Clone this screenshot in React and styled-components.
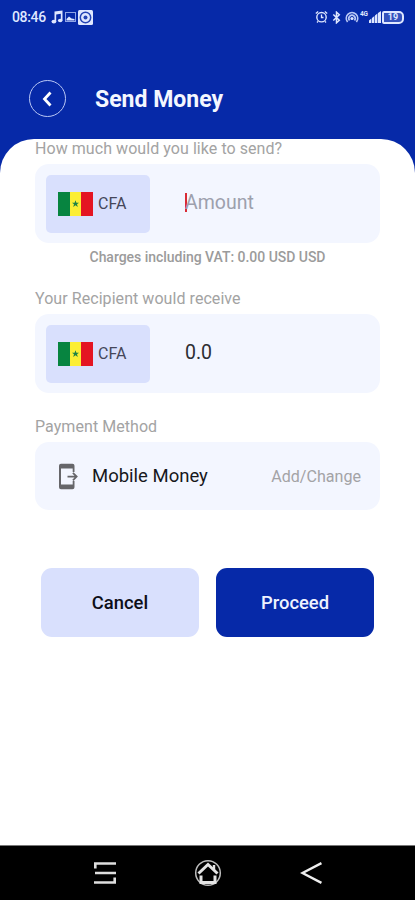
import styled, { createGlobalStyle } from "styled-components";

const GlobalStyle = createGlobalStyle`
    * {
        box-sizing: border-box;
    }

    body {
        margin: 0;
        background-color: #ffffff;
        font-family: Roboto, "Liberation Sans", sans-serif;
    }
`;

const Screen = styled.div`
    width: 415px;
    height: 900px;
    display: flex;
    flex-direction: column;
    overflow: hidden;
    background-color: #0629a8;
`;

const StatusBar = styled.div`
    height: 34px;
    padding: 0 11px 0 12px;
    display: flex;
    align-items: center;
    justify-content: space-between;
    flex-shrink: 0;
    color: #dfe7ff;
`;

const StatusGroup = styled.div`
    display: flex;
    align-items: center;
    gap: ${({ $gap }) => $gap}px;
`;

const Clock = styled.span`
    margin-right: 3px;
    font-size: 14px;
    font-weight: 500;
    letter-spacing: -0.35px;
`;

const Header = styled.header`
    height: 105px;
    padding: 46px 0 0 29px;
    display: flex;
    align-items: flex-start;
    gap: 29px;
    flex-shrink: 0;
`;

const BackButton = styled.button`
    width: 37px;
    height: 37px;
    padding: 0;
    border: 1px solid #b9c7f5;
    border-radius: 50%;
    display: flex;
    align-items: center;
    justify-content: center;
    background: none;
    color: #ffffff;
`;

const Title = styled.h1`
    margin: 0;
    font-size: 23px;
    font-weight: 700;
    line-height: 39px;
    color: #f4f7ff;
`;

const Sheet = styled.main`
    flex: 1;
    padding: 0 35px;
    border-radius: 34px 34px 0 0;
    background-color: #ffffff;
`;

const Label = styled.div`
    height: 25px;
    margin-top: ${({ $top }) => $top || 0}px;
    font-size: 16px;
    line-height: 19px;
    letter-spacing: 0.06px;
    white-space: nowrap;
    color: #a3a3a3;
`;

const Field = styled.div`
    width: 345px;
    height: 79px;
    padding: 0 11px;
    border-radius: 14px;
    display: flex;
    align-items: center;
    background-color: #f3f6ff;
`;

const CurrencyChip = styled.div`
    width: 104px;
    height: 58px;
    padding-left: 12px;
    border-radius: 5px;
    display: flex;
    align-items: center;
    gap: 5px;
    background-color: #d9e0fd;
    font-size: 16px;
    color: #45475a;
`;

const Value = styled.div`
    margin-left: 35px;
    padding-bottom: 1px;
    font-size: 19.5px;
    line-height: 24px;
    color: ${({ $placeholder }) => ($placeholder ? "#9da0ad" : "#2c2d33")};
`;

const Caret = styled.span`
    display: inline-block;
    width: 2px;
    height: 19px;
    margin-right: -2px;
    vertical-align: -3px;
    background-color: #d92b35;
`;

const Charges = styled.div`
    height: 46px;
    padding-top: 6px;
    font-size: 14px;
    font-weight: 500;
    line-height: 17px;
    letter-spacing: -0.03px;
    text-align: center;
    white-space: nowrap;
    color: #9b9b9b;
`;

const PaymentField = styled(Field)`
    height: 68px;
    padding: 0 19px 0 20px;
`;

const MethodName = styled.span`
    margin-left: 10px;
    padding-bottom: 1px;
    font-size: 18.5px;
    color: #17181c;
`;

const ChangeLink = styled.span`
    margin-left: auto;
    font-size: 16.1px;
    color: #a3a3a6;
`;

const Actions = styled.div`
    margin-top: 58px;
    padding: 0 6px;
    display: flex;
    gap: 17px;
`;

const ActionButton = styled.button`
    flex: 1;
    height: 69px;
    padding: 0;
    border: none;
    border-radius: 11px;
    background-color: ${({ $primary }) => ($primary ? "#0629a8" : "#d9e0fd")};
    font-family: inherit;
    font-size: 18.4px;
    font-weight: 500;
    color: ${({ $primary }) => ($primary ? "#eef2ff" : "#0d0e18")};
`;

const NavBar = styled.nav`
    height: 55px;
    border-top: 1px solid #777777;
    display: flex;
    align-items: center;
    justify-content: center;
    gap: 78px;
    flex-shrink: 0;
    background-color: #000000;
`;

function MusicIcon() {
    return (
        <svg width="12" height="14" viewBox="0 0 12 14" fill="currentColor">
            <path d="M3.5 1.5 11.5.5v10h-1.7V3.8l-4.6.6v7.3H3.5Z" />
            <ellipse cx="2.9" cy="11.6" rx="2.4" ry="1.9" />
            <ellipse cx="9.2" cy="10.5" rx="2.3" ry="1.8" />
        </svg>
    );
}

function PictureIcon() {
    return (
        <svg width="11" height="10" viewBox="0 0 11 10">
            <rect x=".5" y=".5" width="10" height="9" fill="none" stroke="#8fa4e6" />
            <path d="M1.5 8.5V7L4 4.5 6.5 6.5 9.5 7v1.5Z" fill="currentColor" />
        </svg>
    );
}

function RecorderIcon() {
    return (
        <svg width="15" height="15" viewBox="0 0 15 15">
            <rect width="15" height="15" rx="1.5" fill="currentColor" />
            <circle cx="7.5" cy="7.5" r="5.2" fill="none" stroke="#2444b4" strokeWidth="1.5" />
            <circle cx="7.5" cy="7.5" r="2" fill="#2444b4" />
        </svg>
    );
}

function AlarmIcon() {
    return (
        <svg width="13" height="14" viewBox="0 0 13 14" fill="none" stroke="currentColor">
            <circle cx="6.5" cy="7.2" r="4.7" strokeWidth="1.4" />
            <path
                d="M6.5 4.5v3h2M.8 3.4 3.2 1.4M12.2 3.4 9.8 1.4M3 11.3l-1 1.2M10 11.3l1 1.2"
                strokeWidth="1.3"
            />
        </svg>
    );
}

function BluetoothIcon() {
    return (
        <svg width="9" height="13" viewBox="0 0 8 13" fill="none" stroke="currentColor" strokeWidth="1.5">
            <path d="m.8 3.5 6 5.7L4 11.8V1.2l2.8 2.6-6 5.7" />
        </svg>
    );
}

function HotspotIcon() {
    return (
        <svg width="14" height="13" viewBox="0 0 14 13" fill="none" stroke="#b9c7f5" strokeWidth="1.7">
            <path d="M2.6 11A5.7 5.7 0 1 1 11.4 11M4.5 9.5a3.2 3.2 0 1 1 5 0" />
            <circle cx="7" cy="7.5" r="1.6" fill="#dfe7ff" stroke="none" />
        </svg>
    );
}

const NetworkLabel = styled.span`
    width: 8px;
    height: 13px;
    font-size: 6.5px;
    font-weight: 700;
    line-height: 7px;
    letter-spacing: -0.3px;
`;

function SignalIcon() {
    return (
        <svg width="12" height="12" viewBox="0 0 12 12" fill="currentColor">
            <path d="M0 9.5 2.4 7.5V12H0zM3 7l2.4-2v7H3zM6 4.5l2.4-2V12H6zM9 2l3-2v12H9z" />
        </svg>
    );
}

const Battery = styled.div`
    width: 22px;
    height: 13px;
    border: 2px solid currentColor;
    border-radius: 2px 5px 5px 2px;
    display: flex;
    align-items: center;
    justify-content: center;
    background-color: #3552bd;
    font-size: 9px;
    font-weight: 700;
    line-height: 9px;
`;

function FlagIcon() {
    return (
        <svg width="35" height="24" viewBox="0 0 35 24">
            <path d="M0 0h12v24H0z" fill="#078440" />
            <path d="M12 0h11v24H12z" fill="#fcee35" />
            <path d="M23 0h12v24H23z" fill="#e41522" />
            <path
                d="m17.5 8.2.9 2.5H21l-2 1.6.8 2.6-2.3-1.6-2.3 1.6.8-2.6-2-1.6h2.6Z"
                fill="#218346"
            />
        </svg>
    );
}

function ChevronIcon() {
    return (
        <svg width="11" height="16" viewBox="0 0 11 16" fill="none" stroke="currentColor" strokeWidth="2.8">
            <path d="M8.5 1.5 2.5 8l6 6.5" />
        </svg>
    );
}

function MobileTransferIcon() {
    return (
        <svg width="27" height="27" viewBox="0 0 27 27" fill="#66666a">
            <path d="M6 .8h11.5a2 2 0 0 1 2 2V9h-1.8V5.5H6v16h11.7V18h1.8v6.2a2 2 0 0 1-2 2H6a2 2 0 0 1-2-2V2.8a2 2 0 0 1 2-2Z" />
            <path d="M12.5 12.7h7l-2.2-2.2 1.2-1.2 4.4 4.3-4.4 4.3-1.2-1.2 2.2-2.2h-7Z" />
        </svg>
    );
}

function RecentsIcon() {
    return (
        <svg width="22" height="22" viewBox="0 0 22 22" fill="none" stroke="#dedede" strokeWidth="2.6">
            <path d="M22 1.5H1.3V6.5M1 11h21M0 20.5h20.7V15.5" />
        </svg>
    );
}

function HomeIcon() {
    return (
        <svg width="28" height="28" viewBox="0 0 28 28" fill="none" stroke="#e4e4e4">
            <circle cx="14" cy="14" r="12.3" strokeWidth="1.5" stroke="#bdbdbd" />
            <path d="M4.5 14.5 14 5.5l9.5 9" strokeWidth="3" />
            <path d="M7 16.5v7h14v-7" strokeWidth="3" />
            <path d="M20 6v5" strokeWidth="2.4" />
        </svg>
    );
}

function NavBackIcon() {
    return (
        <svg width="22" height="22" viewBox="0 0 22 22" fill="none" stroke="#eeeeee" strokeWidth="2.5">
            <path d="M21.5 1.2 2.5 11l19 9.8" />
        </svg>
    );
}

function Currency() {
    return (
        <CurrencyChip>
            <FlagIcon />
            CFA
        </CurrencyChip>
    );
}

function App() {
    return (
        <>
            <GlobalStyle />
            <Screen>
                <StatusBar>
                    <StatusGroup $gap={2}>
                        <Clock>08:46</Clock>
                        <MusicIcon />
                        <PictureIcon />
                        <RecorderIcon />
                    </StatusGroup>
                    <StatusGroup $gap={1}>
                        <StatusGroup $gap={4}>
                            <AlarmIcon />
                            <BluetoothIcon />
                            <HotspotIcon />
                        </StatusGroup>
                        <NetworkLabel>4G</NetworkLabel>
                        <SignalIcon />
                        <Battery>19</Battery>
                    </StatusGroup>
                </StatusBar>
                <Header>
                    <BackButton>
                        <ChevronIcon />
                    </BackButton>
                    <Title>Send Money</Title>
                </Header>
                <Sheet>
                    <Label>How much would you like to send?</Label>
                    <Field>
                        <Currency />
                        <Value $placeholder>
                            <Caret />
                            Amount
                        </Value>
                    </Field>
                    <Charges>Charges including VAT: 0.00 USD USD</Charges>
                    <Label>Your Recipient would receive</Label>
                    <Field>
                        <Currency />
                        <Value>0.0</Value>
                    </Field>
                    <Label $top={24}>Payment Method</Label>
                    <PaymentField>
                        <MobileTransferIcon />
                        <MethodName>Mobile Money</MethodName>
                        <ChangeLink>Add/Change</ChangeLink>
                    </PaymentField>
                    <Actions>
                        <ActionButton>Cancel</ActionButton>
                        <ActionButton $primary>Proceed</ActionButton>
                    </Actions>
                </Sheet>
                <NavBar>
                    <RecentsIcon />
                    <HomeIcon />
                    <NavBackIcon />
                </NavBar>
            </Screen>
        </>
    );
}

export default App;
